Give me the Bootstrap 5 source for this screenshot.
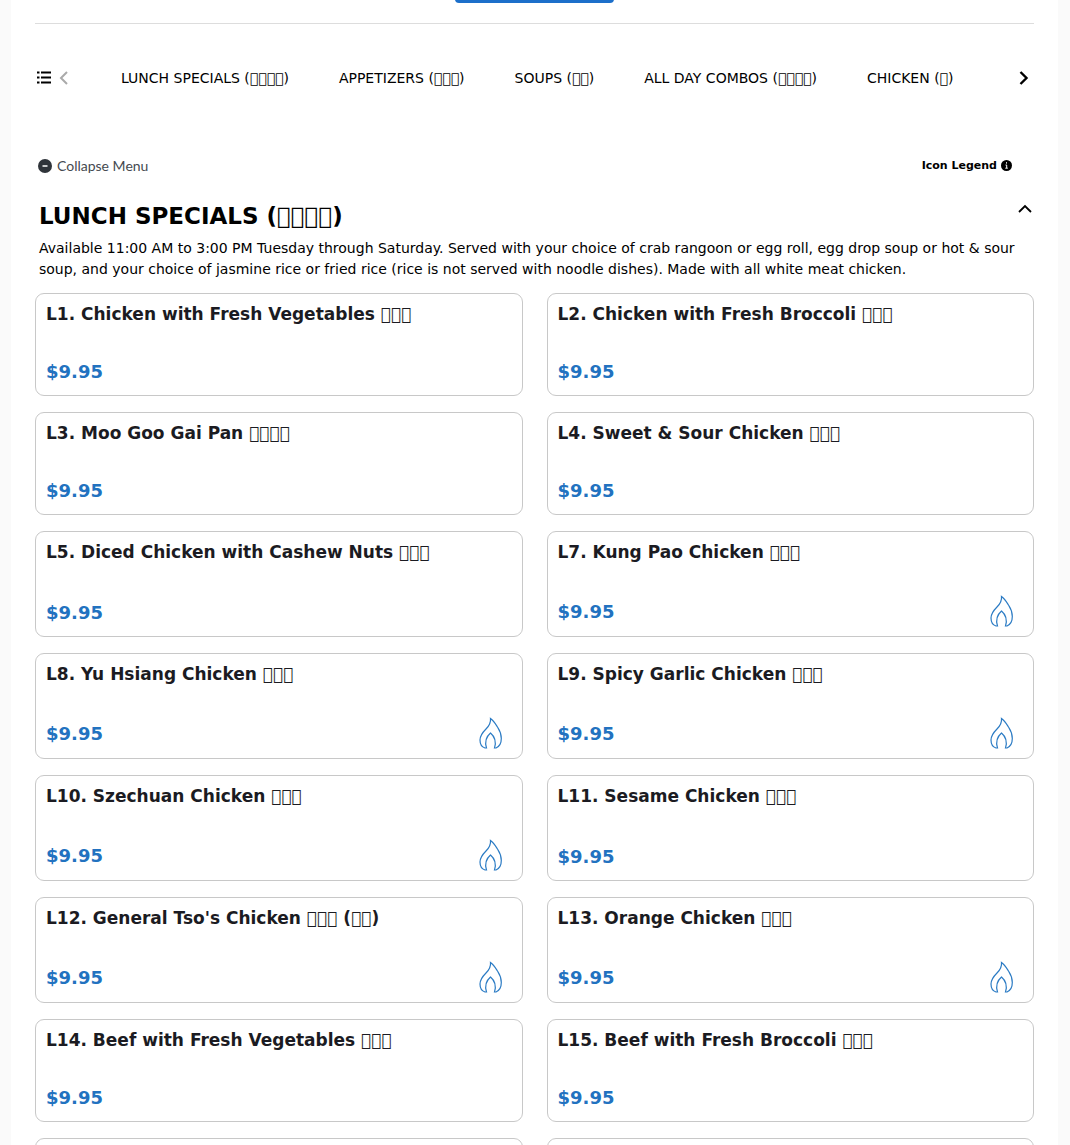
<!DOCTYPE html>
<html lang="en">
<head>
<meta charset="utf-8">
<meta name="viewport" content="width=device-width, initial-scale=1">
<title>Menu - Lunch Specials</title>
<link href="https://cdn.jsdelivr.net/npm/bootstrap@5.3.0/dist/css/bootstrap.min.css" rel="stylesheet">
<style>
  body { background: #fafafa; color: #000; font-family: "DejaVu Sans", sans-serif; font-size: 14px; line-height: 21px; overflow-x: hidden; }
  .menu-page { background: #fff; margin: 0 12px 0 11px; padding: 0 24px; }
  .order-bar { height: 23px; }
  .order-btn { width: 159px; height: 40px; margin-top: -37px; background: #1c6fca; border-radius: 4px; border: 0; }
  .rule { border-top: 1px solid #ddd; }
  .category-bar { padding-top: 44px; height: 119px; }
  .category-list { gap: 50px; margin-left: 52px; white-space: nowrap; }
  .category-list a { color: #000; text-decoration: none; }
  .plain-btn { background: none; border: 0; padding: 0; color: #000; line-height: 21px; display: flex; align-items: center; }
  .list-btn { padding: 3px 0 0 2px; }
  .prev-btn { padding: 3px 0 0 8px; }
  .next-btn { padding: 2px 4px 0 0; }
  .collapse-btn { font-family: Lato, sans-serif; font-size: 14px; color: #454a50; gap: 5px; margin-left: 3px; }
  .legend-btn { font-size: 11px; font-weight: 700; gap: 4px; margin-right: 22px; }
  .section-head { padding: 25px 4px 0; }
  .section-title { font-size: 23px; line-height: 30px; font-weight: 700; margin: 0; }
  .fold-btn { margin-top: 3px; margin-right: -2px; }
  .section-text { margin: 7px 0 13px; }
  .dish { border: 1px solid #c8c8c8; border-radius: 9px; padding: 9px 10px; background: #fff; }
  .dish-name { font-size: 17px; line-height: 22px; font-weight: 700; color: #1b1b22; margin: 0 0 32px; }
  .dish-price { font-size: 18px; line-height: 29px; font-weight: 700; color: #2272c0; }
  .dish-foot { padding-right: 10px; }
  .flame { width: 23px; height: 32px; fill: none; stroke: #2b7bc4; }
</style>
<script src="https://cdn.jsdelivr.net/npm/bootstrap@5.3.0/dist/js/bootstrap.bundle.min.js"></script>
</head>
<body>
<svg class="d-none" aria-hidden="true">
  <symbol id="flame" viewBox="0 0 23 32">
    <path d="M11.500 1.500C12 6 10.500 8.500 7 12C3 16 1 19 1 23C1 27 3 30 6 31H7.500C5.500 24.500 8 19 11.500 16C15 19 17.500 24.500 15.500 31H17C20.500 29.500 22.300 26 22.300 21.500C22.300 16.500 20.500 13 18.500 10C16 6 14.500 3.500 11.500 1.500Z" stroke-width="1.200"/>
  </symbol>
</svg>
<main class="menu-page">
  <div class="order-bar d-flex justify-content-center"><button type="button" class="order-btn" aria-label="Order"></button></div>
  <div class="rule"></div>
  <nav class="category-bar d-flex align-items-start" aria-label="Menu categories">
    <button type="button" class="plain-btn list-btn" aria-label="All categories">
      <svg width="14" height="13" viewBox="0 0 14 13" stroke="#000" stroke-width="2"><path d="M0 1.500h2.500M4 1.500h10M0 6.500h2.500M4 6.500h10M0 11.500h2.500M4 11.500h10"/></svg>
    </button>
    <button type="button" class="plain-btn prev-btn" aria-label="Previous"><svg width="10" height="14" viewBox="0 0 10 14" fill="none" stroke="#aaa" stroke-width="2"><path d="M8 1L2 7l6 6"/></svg></button>
    <div class="category-list d-flex flex-grow-1">
      <a href="#lunch">LUNCH SPECIALS (&#xE900;&#xE900;&#xE900;&#xE900;)</a>
      <a href="#appetizers">APPETIZERS (&#xE900;&#xE900;&#xE900;)</a>
      <a href="#soups">SOUPS (&#xE900;&#xE900;)</a>
      <a href="#combos">ALL DAY COMBOS (&#xE900;&#xE900;&#xE900;&#xE900;)</a>
      <a href="#chicken">CHICKEN (&#xE900;)</a>
    </div>
    <button type="button" class="plain-btn next-btn" aria-label="Next"><svg width="12" height="16" viewBox="0 0 12 16" fill="none" stroke="#000" stroke-width="2.400"><path d="M2.500 2l6 6-6 6"/></svg></button>
  </nav>
  <div class="d-flex justify-content-between pt-2 mt-1">
    <button type="button" class="plain-btn collapse-btn">
      <svg width="14" height="14" viewBox="0 0 14 14"><circle cx="7" cy="7" r="7" fill="#2f343a"/><path d="M4.500 7h5" stroke="#fff" stroke-width="1.500"/></svg>Collapse Menu
    </button>
    <button type="button" class="plain-btn legend-btn">Icon Legend
      <svg width="11" height="11" viewBox="0 0 11 11"><circle cx="5.500" cy="5.500" r="5.500"/><path d="M5.500 2.200v1.400M4.500 5h1.200v3M4.300 8.200h2.500" stroke="#fff" fill="none"/></svg>
    </button>
  </div>
  <section id="lunch">
    <div class="section-head">
      <div class="d-flex justify-content-between align-items-start">
        <h2 class="section-title">LUNCH SPECIALS (&#xE900;&#xE900;&#xE900;&#xE900;)</h2>
        <button type="button" class="plain-btn fold-btn" aria-label="Collapse section"><svg width="14" height="10" viewBox="0 0 14 10" fill="none" stroke="#000" stroke-width="1.800"><path d="M1 8l6-6 6 6"/></svg></button>
      </div>
      <p class="section-text">Available 11:00 AM to 3:00 PM Tuesday through Saturday. Served with your choice of crab rangoon or egg roll, egg drop soup or hot &amp; sour soup, and your choice of jasmine rice or fried rice (rice is not served with noodle dishes). Made with all white meat chicken.</p>
    </div>
    <div class="row gx-4 gy-3" id="dishes"></div>
  </section>
</main>
<script>
  const T = "\uE900";
  const dishes = [
    ["L1. Chicken with Fresh Vegetables " + T.repeat(3)],
    ["L2. Chicken with Fresh Broccoli " + T.repeat(3)],
    ["L3. Moo Goo Gai Pan " + T.repeat(4)],
    ["L4. Sweet & Sour Chicken " + T.repeat(3)],
    ["L5. Diced Chicken with Cashew Nuts " + T.repeat(3)],
    ["L7. Kung Pao Chicken " + T.repeat(3), true],
    ["L8. Yu Hsiang Chicken " + T.repeat(3), true],
    ["L9. Spicy Garlic Chicken " + T.repeat(3), true],
    ["L10. Szechuan Chicken " + T.repeat(3), true],
    ["L11. Sesame Chicken " + T.repeat(3)],
    ["L12. General Tso's Chicken " + T.repeat(3) + " (" + T.repeat(2) + ")", true],
    ["L13. Orange Chicken " + T.repeat(3), true],
    ["L14. Beef with Fresh Vegetables " + T.repeat(3)],
    ["L15. Beef with Fresh Broccoli " + T.repeat(3)],
    [""], [""]
  ];
  const flame = '<svg class="flame" role="img" aria-label="Spicy"><use href="#flame"/></svg>';
  document.getElementById("dishes").innerHTML = dishes.map(([name, spicy]) =>
    `<div class="col-6"><article class="dish h-100 d-flex flex-column justify-content-between">
      <h3 class="dish-name">${name.replace("&", "&amp;")}</h3>
      <div class="dish-foot d-flex justify-content-between align-items-center"><span class="dish-price">${name ? "$9.95" : ""}</span>${spicy ? flame : ""}</div>
    </article></div>`).join("");
</script>
</body>
</html>
